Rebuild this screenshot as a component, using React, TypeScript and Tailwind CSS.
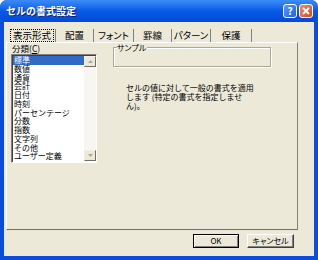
const categories = [
  "標準",
  "数値",
  "通貨",
  "会計",
  "日付",
  "時刻",
  "パーセンテージ",
  "分数",
  "指数",
  "文字列",
  "その他",
  "ユーザー定義",
];

const tabs = [
  { label: "配置", w: "w-[38px]" },
  { label: "フォント", w: "w-[40px]" },
  { label: "罫線", w: "w-[38px]" },
  { label: "パターン", w: "w-[39px]" },
  { label: "保護", w: "w-[41px]" },
];

function ScrollArrow({ down = false }: { down?: boolean }) {
  return (
    <div className="flex h-[11px] w-[12px] items-center justify-center border border-t-[#f1efe2] border-l-[#f1efe2] border-r-[#716f64] border-b-[#716f64] bg-[#ece9d8]">
      <svg width="5" height="3" viewBox="0 0 5 3">
        <path d={down ? "M0 0H5L2.5 3Z" : "M0 3H5L2.5 0Z"} fill="#aca899" />
      </svg>
    </div>
  );
}

export default function App() {
  return (
    <div
      className="flex h-[260px] w-[318px] flex-col overflow-hidden rounded-t-[7px] bg-[#0a4ddc] text-black"
      style={{ fontFamily: '"Noto Sans CJK JP", "Noto Sans", sans-serif' }}
    >
      {/* title bar */}
      <div className="flex h-[22px] shrink-0 items-center justify-between bg-gradient-to-b from-[#3c8cf8] via-[#0859e8] to-[#0449d8] pl-[6px] pr-[5px]">
        <span className="text-[10px] font-bold leading-none text-white [text-shadow:1px_1px_#0a246a]">
          セルの書式設定
        </span>
        <div className="flex gap-[2px]">
          <div className="flex h-[14px] w-[14px] items-center justify-center rounded-[3px] border border-white bg-gradient-to-br from-[#5b9af9] to-[#1c5fe0] text-[10px] font-bold leading-none text-white">
            ?
          </div>
          <div className="flex h-[14px] w-[14px] items-center justify-center rounded-[3px] border border-white bg-gradient-to-br from-[#f08a6a] to-[#d7451e]">
            <svg width="8" height="8" viewBox="0 0 8 8">
              <path d="M1 1L7 7M7 1L1 7" stroke="white" strokeWidth="1.8" />
            </svg>
          </div>
        </div>
      </div>

      {/* client area */}
      <div className="mx-[4px] mb-[4px] flex flex-1 flex-col bg-[#ece9d8]">
        {/* tabs */}
        <div className="ml-[2px] mt-[7px] flex h-[13px] text-[9.5px] leading-none">
          <div className="flex h-[13px] w-[50px] items-center border-r border-[#808080] pl-[4px]">
            <span className="border border-dotted border-black px-[2px] py-[1px]">表示形式</span>
          </div>
          {tabs.map((t) => (
            <div
              key={t.label}
              className={`flex h-[13px] ${t.w} items-center justify-center border-r border-[#808080] [font-feature-settings:'palt']`}
            >
              {t.label}
            </div>
          ))}
        </div>

        {/* panel */}
        <div className="ml-[2px] mr-[16px] flex h-[188px] border border-t-white border-l-white border-r-[#808080] border-b-[#716f64] pl-[4px]">
          <div className="flex flex-col">
            <div className="pl-[1px] text-[8.5px] leading-[10px]">
              分類(<span className="underline">C</span>)
            </div>
            <div className="mt-[1px] flex h-[109px] w-[86px] border border-t-[#808080] border-l-[#808080] border-r-white border-b-white shadow-[inset_1px_1px_#404040] bg-white">
              <div className="flex flex-1 flex-col pl-[1px] pt-[1px] text-[8px] leading-[8.75px]">
                {categories.map((c, i) => (
                  <div
                    key={c}
                    className={`pl-[1px] ${i === 0 ? "bg-[#316ac5] text-white" : ""}`}
                  >
                    {c}
                  </div>
                ))}
              </div>
              <div className="mb-[1px] mt-[1px] flex w-[12px] flex-col justify-between bg-[#f7f6f1]">
                <ScrollArrow />
                <ScrollArrow down />
              </div>
            </div>
          </div>

          <div className="ml-[16px] flex flex-col">
            <div className="relative mt-[4px] h-[20px] w-[158px] border border-[#aca899] shadow-[inset_1px_1px_white,1px_1px_white]">
              <span className="absolute -top-[5px] left-[3px] bg-[#ece9d8] pr-[1px] text-[8px] leading-[9px] [font-feature-settings:'palt']">
                サンプル
              </span>
            </div>
            <p className="ml-[13px] mt-[16px] text-[8px] leading-[9px]">
              セルの値に対して一般の書式を適用
              <br />
              します (特定の書式を指定しませ
              <br />
              ん)。
            </p>
          </div>
        </div>

        {/* buttons */}
        <div className="mt-[4px] flex justify-end gap-[8px] pr-[20px] text-[8px] leading-none">
          <div className="flex h-[14px] w-[46px] items-center justify-center border border-black bg-[#ece9d8] shadow-[inset_1px_1px_white,inset_-1px_-1px_#808080]">
            OK
          </div>
          <div className="flex h-[14px] w-[47px] items-center justify-center border border-t-white border-l-white border-r-[#404040] border-b-[#404040] bg-[#ece9d8] shadow-[inset_-1px_-1px_#808080] [font-feature-settings:'palt']">
            キャンセル
          </div>
        </div>
      </div>
    </div>
  );
}
